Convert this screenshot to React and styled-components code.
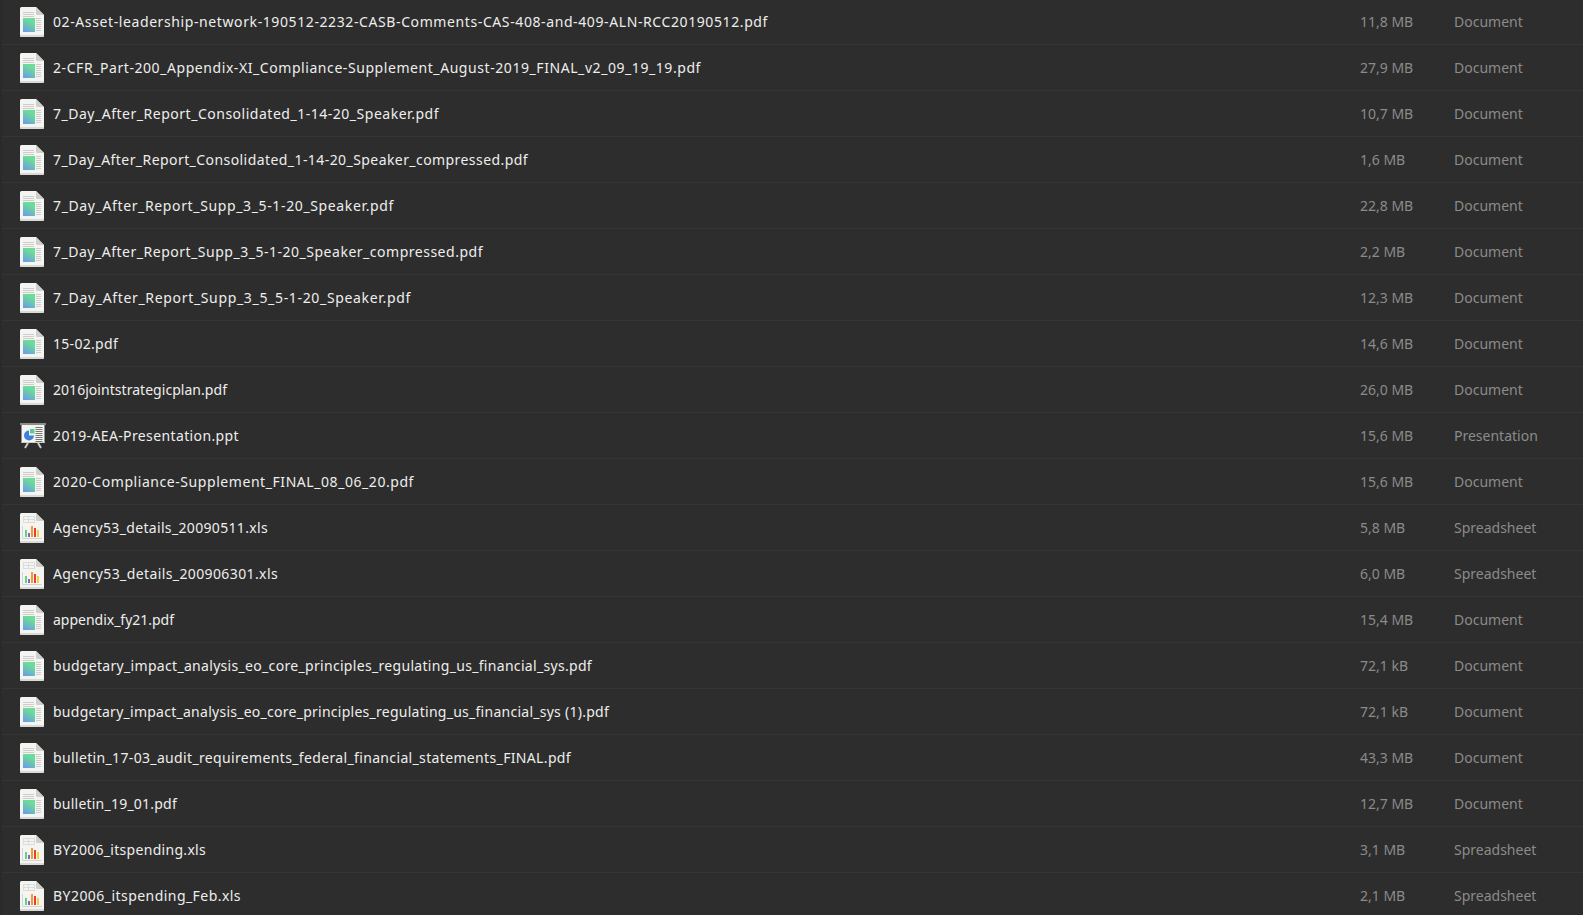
import React, { useLayoutEffect, useRef } from "react";
import styled, { createGlobalStyle } from "styled-components";

const Global = createGlobalStyle`
  html, body { margin: 0; padding: 0; height: 100%; overflow: hidden; background: #2a2a2a; }
  #root { height: 100%; }
`;

const List = styled.div`
  height: 916px;
  overflow: hidden;
  margin-top: -1px;
  margin-left: 2px;
  background: #2d2d2d;
  font-family: "Noto Sans", sans-serif;
  font-size: 14px;
`;

const Row = styled.div`
  display: grid;
  grid-template-columns: 33px 1fr 94px 129px;
  align-items: center;
  height: 45px;
  padding-left: 18px;
  border-bottom: 1px solid #353535;
`;

const IconCell = styled.div`
  display: flex;
  align-items: center;
`;

const Name = styled.span`
  justify-self: start;
  white-space: nowrap;
  color: #eeeeec;
`;

const Meta = styled.span`
  white-space: nowrap;
  color: #8b8b8a;
`;

const Page = () => (
  <>
    <path d="M1.5 0H16l8 8v20.5a1.5 1.5 0 0 1-1.5 1.5h-21A1.5 1.5 0 0 1 0 28.5v-27A1.5 1.5 0 0 1 1.5 0z" fill="#f4f4f2" />
    <path d="M0 28h24v.5a1.5 1.5 0 0 1-1.5 1.5h-21A1.5 1.5 0 0 1 0 28.5z" fill="#d9d9d5" />
    <path d="M16 0l8 8h-6.5A1.5 1.5 0 0 1 16 6.5z" fill="#cfcfcb" />
  </>
);

const Doc = () => (
  <svg width="24" height="30" viewBox="0 0 24 30">
    <defs>
      <linearGradient id="docg" x1="0.7" y1="0.1" x2="0.25" y2="1">
        <stop offset="0.15" stopColor="#6cdc98" />
        <stop offset="1" stopColor="#6aa0e2" />
      </linearGradient>
    </defs>
    <Page />
    {[5, 7, 9].map((y) => (
      <rect key={y} x="3" y={y} width="11" height="1" fill="#cdcdc9" />
    ))}
    <rect x="3" y="11" width="12" height="14" fill="url(#docg)" />
    {[11, 13, 15, 17, 19, 21, 23].map((y) => (
      <rect key={y} x="16" y={y} width="5" height="1" fill="#cdcdc9" />
    ))}
  </svg>
);

const Sheet = () => (
  <svg width="24" height="30" viewBox="0 0 24 30">
    <Page />
    <path d="M3 3.5H15M3 6.5H15M3 9.5H15M3.5 3v7M8.5 3v7M14.5 3v7" stroke="#dcdcd8" strokeWidth="1" fill="none" />
    <path d="M2.5 13v12.5H22" stroke="#d4d4d0" strokeWidth="1" fill="none" />
    <rect x="5" y="17" width="2" height="7" fill="#5ad68c" />
    <rect x="8" y="20" width="2" height="4" fill="#8e63b8" />
    <rect x="11" y="13" width="2" height="11" fill="#f59a2f" />
    <rect x="14" y="15" width="2" height="9" fill="#e33f3f" />
    <rect x="17" y="17" width="2" height="7" fill="#f6d32d" />
  </svg>
);

const Slides = () => (
  <svg width="26" height="30" viewBox="0 0 26 30">
    <rect x="0" y="2" width="26" height="2" fill="#8d8d89" />
    <rect x="1.5" y="4" width="23" height="18" fill="#f4f4f2" />
    <rect x="1.5" y="21" width="23" height="1" fill="#d0d0cc" />
    <path d="M8 22l-3 5M18 22l3 5" stroke="#c9c9c5" strokeWidth="2" fill="none" />
    <path d="M9 9.5v5h5a5 5 0 1 1-5-5z" fill="#3f80dc" />
    <rect x="10" y="8" width="4.5" height="4.5" fill="#5ccb8e" />
    {[6, 8, 10, 12, 14, 16, 18, 20].map((y) => (
      <rect key={y} x="15.5" y={y} width="7" height="1" fill="#77776f" />
    ))}
  </svg>
);

const icons = { Document: Doc, Spreadsheet: Sheet, Presentation: Slides };

const files = [
  ["02-Asset-leadership-network-190512-2232-CASB-Comments-CAS-408-and-409-ALN-RCC20190512.pdf", "11,8 MB", "Document", 715],
  ["2-CFR_Part-200_Appendix-XI_Compliance-Supplement_August-2019_FINAL_v2_09_19_19.pdf", "27,9 MB", "Document", 648],
  ["7_Day_After_Report_Consolidated_1-14-20_Speaker.pdf", "10,7 MB", "Document", 386],
  ["7_Day_After_Report_Consolidated_1-14-20_Speaker_compressed.pdf", "1,6 MB", "Document", 475],
  ["7_Day_After_Report_Supp_3_5-1-20_Speaker.pdf", "22,8 MB", "Document", 341],
  ["7_Day_After_Report_Supp_3_5-1-20_Speaker_compressed.pdf", "2,2 MB", "Document", 430],
  ["7_Day_After_Report_Supp_3_5_5-1-20_Speaker.pdf", "12,3 MB", "Document", 358],
  ["15-02.pdf", "14,6 MB", "Document", 65],
  ["2016jointstrategicplan.pdf", "26,0 MB", "Document", 174],
  ["2019-AEA-Presentation.ppt", "15,6 MB", "Presentation", 186],
  ["2020-Compliance-Supplement_FINAL_08_06_20.pdf", "15,6 MB", "Document", 361],
  ["Agency53_details_20090511.xls", "5,8 MB", "Spreadsheet", 215],
  ["Agency53_details_200906301.xls", "6,0 MB", "Spreadsheet", 225],
  ["appendix_fy21.pdf", "15,4 MB", "Document", 121],
  ["budgetary_impact_analysis_eo_core_principles_regulating_us_financial_sys.pdf", "72,1 kB", "Document", 539],
  ["budgetary_impact_analysis_eo_core_principles_regulating_us_financial_sys (1).pdf", "72,1 kB", "Document", 556],
  ["bulletin_17-03_audit_requirements_federal_financial_statements_FINAL.pdf", "43,3 MB", "Document", 518],
  ["bulletin_19_01.pdf", "12,7 MB", "Document", 124],
  ["BY2006_itspending.xls", "3,1 MB", "Spreadsheet", 153],
  ["BY2006_itspending_Feb.xls", "2,1 MB", "Spreadsheet", 188],
];

/* The installed font differs from the screenshot's; tracking is fitted at run time so each name ends where it should. */
function FileName({ children, width }) {
  const ref = useRef(null);
  useLayoutEffect(() => {
    const el = ref.current;
    const natural = el.getBoundingClientRect().width;
    el.style.letterSpacing = `${(width - natural) / children.length}px`;
  }, [children, width]);
  return <Name ref={ref}>{children}</Name>;
}

export default function App() {
  return (
    <>
      <Global />
      <List>
        {files.map(([name, size, type, width]) => {
          const Icon = icons[type];
          return (
            <Row key={name}>
              <IconCell>
                <Icon />
              </IconCell>
              <FileName width={width}>{name}</FileName>
              <Meta>{size}</Meta>
              <Meta>{type}</Meta>
            </Row>
          );
        })}
      </List>
    </>
  );
}
